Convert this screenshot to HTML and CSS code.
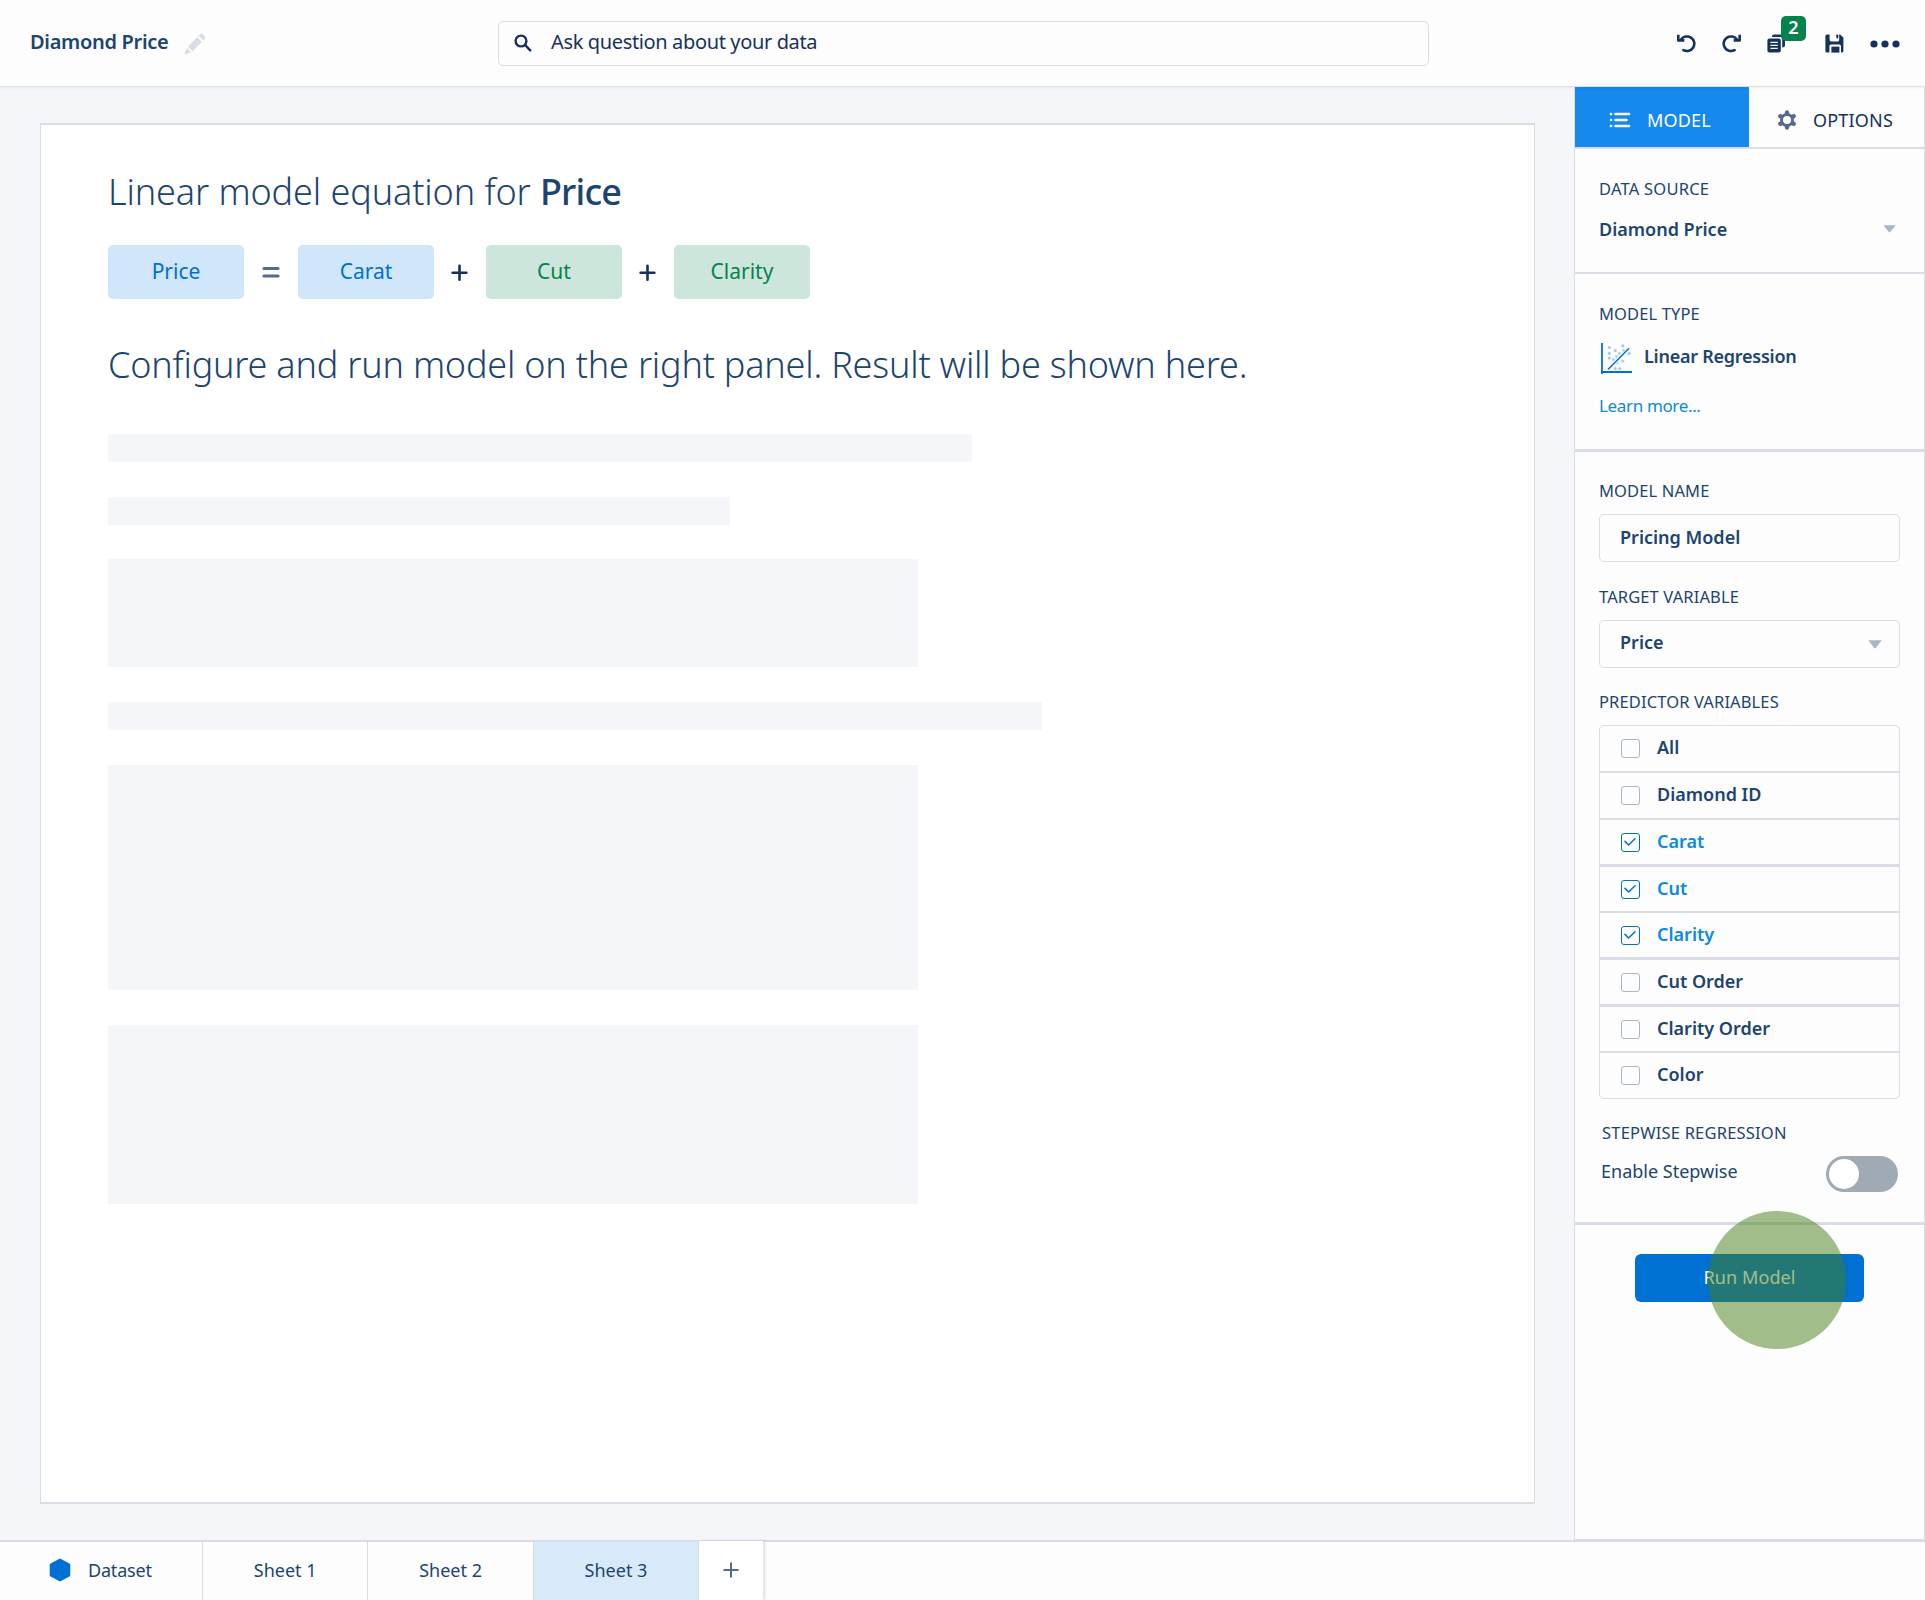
FILE: index.html
```html
<!DOCTYPE html>
<html lang="en">
<head>
    <meta charset="UTF-8">
    <meta name="viewport" content="width=device-width, initial-scale=1.0">
    <title>Diamond Price</title>
    <link rel="stylesheet" href="styles.css">
</head>
<body>

    <!-- Header -->
    <div class="header">
        <div class="header-title">
            <span class="doc-name">Diamond Price</span>
            <svg class="pencil" width="22" height="22" viewBox="0 0 22 22" fill="#d8dde6">
                <path d="M13.2 4.2L17.8 8.8L8.6 18.2L4 13.6Z"/>
                <path d="M14.6 2.8L16.3 1.1Q17.4 .3 18.6 1.1L20.8 3.3Q21.6 4.5 20.8 5.7L19.2 7.4Z"/>
                <path d="M2.9 15L7.2 19.3L1.6 21.4Q.4 21.6 .7 20.4Z"/>
            </svg>
        </div>
        <div class="search-bar">
            <svg width="18" height="18" viewBox="0 0 18 18" fill="none" stroke="#16325c" stroke-width="2.4" stroke-linecap="round">
                <circle cx="7" cy="7" r="5.4"/>
                <path d="M11.2 11.2L16.2 16.4"/>
            </svg>
            <span>Ask question about your data</span>
        </div>
        <div class="toolbar">
            <svg class="undo" width="19" height="19" viewBox="0 0 19 19" fill="none" stroke="#16325c" stroke-width="2.6">
                <path d="M4 5.6A7.3 7.3 0 1 1 6.4 16.1" stroke-linecap="round"/>
                <path d="M1.3 .8V6.4H7.3" stroke-linejoin="round"/>
            </svg>
            <svg class="redo" width="19" height="19" viewBox="0 0 19 19" fill="none" stroke="#16325c" stroke-width="2.6">
                <path d="M15 5.6A7.3 7.3 0 1 0 12.6 16.1" stroke-linecap="round"/>
                <path d="M17.7 .8V6.4H11.7" stroke-linejoin="round"/>
            </svg>
            <div class="clips">
                <svg width="19" height="19" viewBox="0 0 19 19">
                    <path d="M5 2.6Q5 .6 7 .6H16Q18 .6 18 2.6V11.5Q18 13.4 15.2 13.4V4Q15.2 3 14.2 3H5Z" fill="#16325c"/>
                    <rect x=".4" y="4.4" width="13.4" height="14" rx="2" fill="#16325c"/>
                    <path d="M3.4 8.3H10.8M3.4 11.3H10.8M3.4 14.3H10.8" stroke="#fdfdfd" stroke-width="1.3"/>
                </svg>
                <span class="badge">2</span>
            </div>
            <svg class="save" width="19" height="19" viewBox="0 0 19 19" fill="#16325c">
                <path d="M2 .4H4.6V6Q4.6 7.4 6 7.4H12.8Q14.2 7.4 14.2 6V.4H15L18.4 3.6V17Q18.4 18.6 16.8 18.6H16V12.2Q16 10.6 14.4 10.6H6Q4.4 10.6 4.4 12.2V18.6H2Q.4 18.6 .4 17V2Q.4 .4 2 .4Z"/>
                <rect x="11.3" y=".4" width="2" height="4" rx=".8"/>
                <rect x="6.4" y="12.6" width="8" height="6"/>
            </svg>
            <svg class="more" width="30" height="8" viewBox="0 0 30 8" fill="#16325c">
                <circle cx="4" cy="4" r="3.6"/>
                <circle cx="15" cy="4" r="3.6"/>
                <circle cx="26" cy="4" r="3.6"/>
            </svg>
        </div>
    </div>

    <div class="workspace">

        <!-- Result Sheet -->
        <div class="canvas">
            <div class="sheet">
                <h1>Linear model equation for <b>Price</b></h1>
                <div class="equation">
                    <span class="term measure">Price</span>
                    <svg class="operator" width="20" height="20" viewBox="0 0 20 20" stroke="#54698d" stroke-width="3.2" stroke-linecap="round"><path d="M3 6.5H17M3 14H17"/></svg>
                    <span class="term measure">Carat</span>
                    <svg class="operator" width="20" height="20" viewBox="0 0 20 20" stroke="#16325c" stroke-width="2.6" stroke-linecap="round"><path d="M2.6 10.8H16.4M9.5 3.8V17.8"/></svg>
                    <span class="term dimension">Cut</span>
                    <svg class="operator" width="20" height="20" viewBox="0 0 20 20" stroke="#16325c" stroke-width="2.6" stroke-linecap="round"><path d="M2.6 10.8H16.4M9.5 3.8V17.8"/></svg>
                    <span class="term dimension">Clarity</span>
                </div>
                <h2>Configure and run model on the right panel. Result will be shown here.</h2>
                <div class="placeholder line-1"></div>
                <div class="placeholder line-2"></div>
                <div class="placeholder block-1"></div>
                <div class="placeholder line-3"></div>
                <div class="placeholder block-2"></div>
                <div class="placeholder block-3"></div>
            </div>
        </div>

        <!-- Model Panel -->
        <div class="panel">
            <div class="panel-tabs">
                <div class="panel-tab active">
                    <svg width="22" height="16" viewBox="0 0 22 16" stroke="#fff" stroke-width="2.6" stroke-linecap="round">
                        <path d="M6.5 2H20M6.5 8H17.5M6.5 14H20M2 2H2.1M2 8H2.1M2 14H2.1"/>
                    </svg>
                    <span class="tab-model">MODEL</span>
                </div>
                <div class="panel-tab options">
                    <svg width="20" height="20" viewBox="0 0 20 20">
                        <g stroke="#54698d" stroke-width="4.2" stroke-linecap="round">
                            <path d="M10 2.3V17.7M3.3 6.1L16.7 13.9M3.3 13.9L16.7 6.1"/>
                        </g>
                        <circle cx="10" cy="10" r="7" fill="#54698d"/>
                        <circle cx="10" cy="10" r="4" fill="#fdfdfd"/>
                    </svg>
                    <span class="tab-options">OPTIONS</span>
                </div>
            </div>

            <div class="section source">
                <div class="label l-source">DATA SOURCE</div>
                <div class="source-select">
                    <span class="value v-source">Diamond Price</span>
                    <svg width="13" height="8" viewBox="0 0 13 8" fill="#a8b7c7"><path d="M.3 .2H12.7L7.2 7Q6.5 7.8 5.8 7Z"/></svg>
                </div>
            </div>

            <div class="section type">
                <div class="label">MODEL TYPE</div>
                <div class="type-row">
                    <svg width="31" height="31" viewBox="0 0 31 31">
                        <path d="M1 0V31" stroke="#0070d2" stroke-width="1.8"/>
                        <path d="M0 29H31" stroke="#0070d2" stroke-width="2"/>
                        <path d="M7 26.5L28 5.3" stroke="#0070d2" stroke-width="1.5"/>
                        <g fill="#a3cdf0">
                            <circle cx="8.3" cy="4.5" r="1.6"/>
                            <circle cx="8.3" cy="10.4" r="1.6"/>
                            <circle cx="8.3" cy="15" r="1.6"/>
                            <circle cx="14.3" cy="7.6" r="1.6"/>
                            <circle cx="21.8" cy="2.8" r="1.6"/>
                            <circle cx="22.6" cy="7.4" r="1.3"/>
                            <circle cx="28.2" cy="10.4" r="1.6"/>
                            <circle cx="18.4" cy="10.4" r="1.3"/>
                            <circle cx="15.4" cy="13.6" r="1.3"/>
                            <circle cx="12.2" cy="16.4" r="1.3"/>
                            <circle cx="21.8" cy="18" r="1.6"/>
                            <circle cx="16.4" cy="20.4" r="1.1"/>
                            <circle cx="14.3" cy="25.6" r="1.6"/>
                            <circle cx="18.8" cy="25.6" r="1.6"/>
                        </g>
                    </svg>
                    <span class="value v-type">Linear Regression</span>
                </div>
                <a class="learn-more">Learn more...</a>
            </div>

            <div class="section config">
                <div class="label">MODEL NAME</div>
                <div class="field"><span class="value">Pricing Model</span></div>

                <div class="label">TARGET VARIABLE</div>
                <div class="field select">
                    <span class="value">Price</span>
                    <svg width="14" height="9" viewBox="0 0 14 9" fill="#a8b7c7"><path d="M.3 .2H13.7L7.8 7.9Q7 8.8 6.2 7.9Z"/></svg>
                </div>

                <div class="label">PREDICTOR VARIABLES</div>
                <div class="check-list">
                    <div class="check-row"><span class="box"></span><span class="value">All</span></div>
                    <div class="check-row"><span class="box"></span><span class="value">Diamond ID</span></div>
                    <div class="check-row checked thick">
                        <span class="box"><svg width="12" height="8" viewBox="0 0 12 8"><path d="M1 3.4L4.6 7L11 .8"/></svg></span>
                        <span class="value">Carat</span>
                    </div>
                    <div class="check-row checked short">
                        <span class="box"><svg width="12" height="8" viewBox="0 0 12 8"><path d="M1 3.4L4.6 7L11 .8"/></svg></span>
                        <span class="value">Cut</span>
                    </div>
                    <div class="check-row checked thick">
                        <span class="box"><svg width="12" height="8" viewBox="0 0 12 8"><path d="M1 3.4L4.6 7L11 .8"/></svg></span>
                        <span class="value">Clarity</span>
                    </div>
                    <div class="check-row thick"><span class="box"></span><span class="value">Cut Order</span></div>
                    <div class="check-row short"><span class="box"></span><span class="value">Clarity Order</span></div>
                    <div class="check-row"><span class="box"></span><span class="value">Color</span></div>
                </div>

                <div class="stepwise">
                    <div class="label l-stepwise">STEPWISE REGRESSION</div>
                    <div class="stepwise-row">
                        <span class="stepwise-text">Enable Stepwise</span>
                        <span class="toggle"><span class="knob"></span></span>
                    </div>
                </div>
            </div>

            <div class="run">
                <div class="run-button">Run Model</div>
                <div class="tap"></div>
            </div>
        </div>
    </div>

    <!-- Sheet Tabs -->
    <div class="footer">
        <div class="sheet-tab dataset">
            <svg width="22" height="24" viewBox="0 0 22 24" fill="#0070d2"><path d="M10 .9Q11 .3 12 .9L20.4 5.4Q21.3 6 21.3 7V17Q21.3 18 20.4 18.6L12 23.1Q11 23.7 10 23.1L1.6 18.6Q.7 18 .7 17V7Q.7 6 1.6 5.4Z"/></svg>
            <span>Dataset</span>
        </div>
        <div class="sheet-tab">Sheet 1</div>
        <div class="sheet-tab">Sheet 2</div>
        <div class="sheet-tab current">Sheet 3</div>
        <div class="add-tab">
            <svg width="16" height="16" viewBox="0 0 16 16" stroke="#54698d" stroke-width="2" stroke-linecap="round"><path d="M1.2 8H14.8M8 1.2V14.8"/></svg>
        </div>
    </div>

</body>
</html>
```

FILE: styles.css
```css
* { box-sizing: border-box; }
body { margin: 0; height: 1600px; display: flex; flex-direction: column; overflow: hidden; font-family: "Noto Sans", "Open Sans", sans-serif; font-size: 18px; color: #1c4470; background-color: #fdfdfd; }
svg { display: block; flex: none; }
h1, h2 { margin: 0; font-size: 36px; font-weight: 300; line-height: 50px; white-space: nowrap; }
h1 { letter-spacing: -0.1px; }
h1 b { font-weight: 500; letter-spacing: -0.8px; }
h2 { letter-spacing: -0.2px; }
span, .label { white-space: nowrap; }

/* Header */
.header { height: 87px; flex: none; display: flex; align-items: flex-start; background-color: #fdfdfd; border-bottom: 1px solid #dfe2e5; box-shadow: 0 1px 3px rgba(0,0,0,0.05); position: relative; z-index: 2; }
.header-title { width: 498px; padding: 28px 0 0 30px; display: flex; }
.doc-name { width: 154px; font-size: 20px; font-weight: 600; line-height: 28px; letter-spacing: -0.3px; }
.pencil { margin-top: 5px; }
.search-bar { width: 931px; height: 45px; margin-top: 21px; padding: 0 15px 2px; display: flex; align-items: center; gap: 19px; border: 1px solid #d9dbdd; border-radius: 5px; font-size: 20px; line-height: 28px; letter-spacing: -0.36px; color: #16325c; }
.search-bar span { margin-bottom: 1px; }
.toolbar { flex: 1; padding: 34px 24px 0 248px; display: flex; }
.undo { margin-right: 26px; }
.redo { margin-right: 26px; }
.clips { position: relative; width: 19px; margin-right: 39px; }
.badge { position: absolute; left: 14px; top: -18px; width: 25px; height: 25px; border-radius: 5px; background-color: #04844b; color: #fff; font-size: 18px; font-weight: 600; line-height: 23px; text-align: center; }
.save { margin-right: 26px; }
.more { margin-top: 6px; }

/* Workspace */
.workspace { flex: 1; display: flex; }
.canvas { flex: 1; padding: 36px 39px 36px 40px; background-color: #f4f6f9; }
.sheet { height: 1381px; padding: 42px 0 0 67px; background-color: #fff; border: 1px solid #d8dde6; border-top-width: 2px; border-bottom-width: 2px; }
.equation { margin-top: 28px; margin-bottom: 41px; display: flex; align-items: center; }
.term { width: 136px; height: 54px; border-radius: 5px; font-size: 21px; line-height: 53px; text-align: center; }
.operator { margin: 0 16px; }
.operator:first-of-type { margin: 0 17px; }
.measure { background-color: #cfe6fb; color: #0070d2; }
.dimension { background-color: #cde6db; color: #04844b; }
.placeholder { height: 28px; margin-bottom: 35px; background-color: #f4f6f9; }
.line-1 { width: 864px; margin-top: 44px; }
.line-2 { width: 622px; margin-bottom: 34px; }
.line-3 { width: 934px; }
.block-1 { width: 810px; height: 108px; }
.block-2 { width: 810px; height: 225px; }
.block-3 { width: 810px; height: 179px; }

/* Panel */
.panel { width: 351px; flex: none; border: 1px solid #d8dde6; border-top: none; background-color: #fdfdfd; }
.panel-tabs { height: 62px; display: flex; border-bottom: 2px solid #d8dde6; }
.panel-tab { width: 174px; height: 60px; padding-top: 5px; padding-left: 34px; display: flex; align-items: center; gap: 16px; font-size: 18px; color: #16325c; }
.panel-tab.active { background-color: #1589ee; color: #fff; letter-spacing: 0.2px; }
.panel-tab.options { padding-left: 28px; letter-spacing: 0.2px; }
.section { padding: 29px 24px 0 24px; border-bottom: 3px solid #d8dde6; }
.source { height: 125px; border-bottom-width: 2px; }
.type { height: 178px; }
.config { height: 773px; padding-top: 28px; }
.label { font-size: 16.5px; line-height: 22px; letter-spacing: 0.12px; }
.l-source { letter-spacing: 0.22px; }
.value { font-size: 18px; font-weight: 600; line-height: 24px; }
.source-select { margin-top: 17px; padding-right: 4px; display: flex; align-items: center; justify-content: space-between; }
.type-row { margin: 18px 0 19px 2px; height: 31px; display: flex; gap: 12px; }
.v-type { margin-top: 1px; letter-spacing: -0.25px; }
.learn-more { font-size: 17px; line-height: 22px; letter-spacing: -0.35px; color: #0a8ad8; }
.config .label { margin-bottom: 12px; }
.field { height: 48px; margin-bottom: 24px; padding: 0 17px 0 20px; display: flex; align-items: center; justify-content: space-between; border: 1px solid #d8dde6; border-radius: 5px; }
.field .value { margin-bottom: 3px; }
.select { margin-bottom: 23px; }
.select .value { margin-bottom: 4px; }
.check-list { height: 374px; border: 1px solid #d8dde6; border-radius: 5px; }
.check-row { height: 47px; padding-left: 21px; display: flex; align-items: center; gap: 17px; border-bottom: 2px solid #d8dde6; }
.check-row.short { height: 46px; }
.check-row.thick { border-bottom-width: 3px; }
.check-row:last-child { height: 45px; border-bottom: none; }
.check-row .value { margin-bottom: 3px; }
.box { width: 19px; height: 19px; padding: 4px 0 0 2px; border: 1.5px solid #a8b7c7; border-radius: 3px; }
.box svg { fill: none; stroke: #0070d2; stroke-width: 1.5; stroke-linecap: round; stroke-linejoin: round; }
.checked .box { border-color: #0070d2; }
.checked .value { color: #0a8adc; }
.stepwise { padding: 23px 2px 0 2px; }
.config .l-stepwise { margin-left: 1px; letter-spacing: 0.2px; }
.stepwise-row { display: flex; justify-content: space-between; }
.stepwise-text { margin-top: 3px; line-height: 24px; }
.toggle { width: 72px; height: 36px; padding: 3px; border-radius: 18px; background-color: #9faab5; }
.knob { display: block; width: 30px; height: 30px; border-radius: 50%; background-color: #fff; }
.run { position: relative; padding: 29px 0 0 60px; }
.run-button { width: 229px; height: 48px; border-radius: 6px; background-color: #0070d2; color: #fff; line-height: 47px; letter-spacing: 0.1px; text-align: center; }
/* tap marker drawn over the button */
.tap { position: absolute; left: 133px; top: -14px; width: 138px; height: 138px; border-radius: 50%; background-color: rgba(69,127,26,0.506); }

/* Footer */
.footer { height: 60px; flex: none; display: flex; border-top: 2px solid #d8dde6; background-color: #fdfdfd; }
.sheet-tab { width: 165.4px; padding-bottom: 2px; display: flex; align-items: center; justify-content: center; border-right: 1px solid #d9dbdd; }
.dataset { width: 203px; padding-left: 49px; justify-content: flex-start; gap: 17px; letter-spacing: -0.2px; }
.current { background-color: #d8e9f9; }
.add-tab { width: 64px; margin-top: -1px; padding-bottom: 2px; display: flex; align-items: center; justify-content: center; background-color: #fff; box-shadow: 2px 0 3px rgba(0,0,0,0.12); }
```
